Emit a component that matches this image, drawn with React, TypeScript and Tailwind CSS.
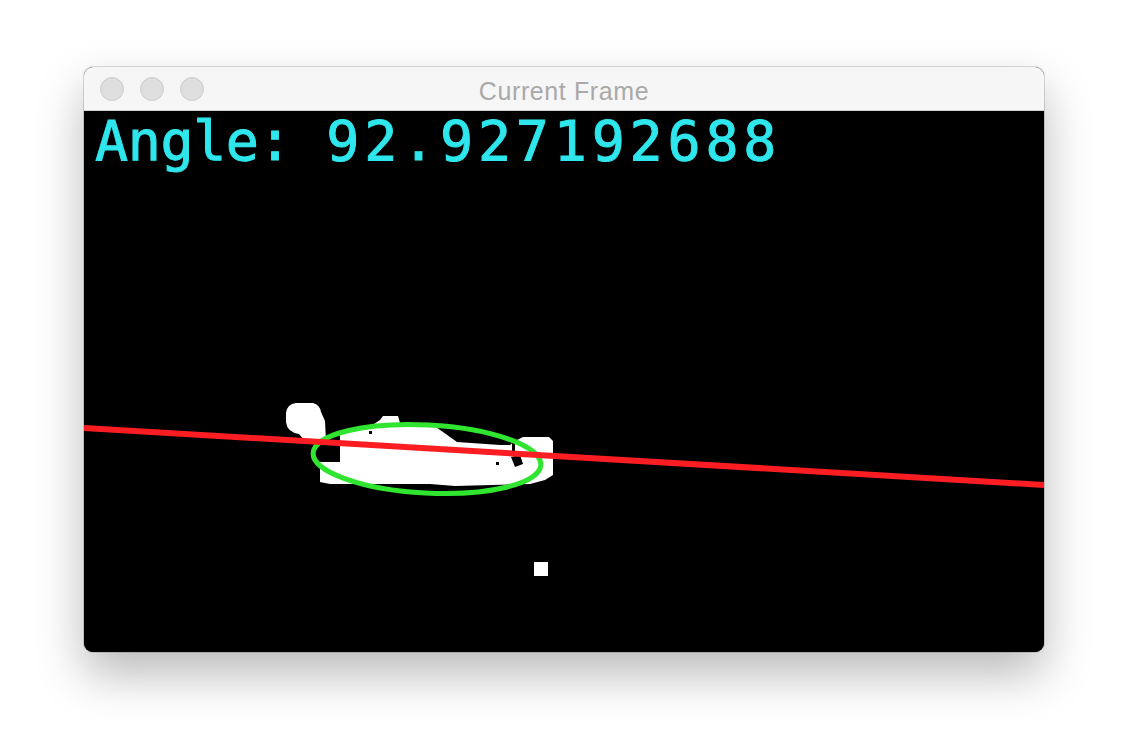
import React from 'react';

const RED = '#fc1d22';
const GREEN = '#2fe52f';

// the OpenCV frame: mask blobs, fitted ellipse and the orientation line
function FrameCanvas() {
  return (
    <svg width="960" height="541" viewBox="0 0 960 541" className="block bg-black">
      <g transform="translate(-84 -111)">
        {/* head blob */}
        <path
          d="M 296 403 L 313 403 Q 320 405 321 412 L 325 421 L 326 441 L 305 441 L 299 434 Q 287 432 286 422 L 286 413 Q 287 404 296 403 Z"
          fill="#fff"
        />
        {/* body blob */}
        <path
          d="M 340 432 L 368 428 L 380 420 L 383 416 L 398 416 L 400 423 L 430 423 L 443 432 L 457 442 L 500 445 L 510 445 L 515 441 L 523 437 L 549 437 L 553 441 L 553 475 L 545 480 L 530 484 L 455 486 L 430 484 L 330 484 L 320 482 L 320 462 L 340 462 Z"
          fill="#fff"
        />
        <path d="M 511 457 L 520 455 L 523 464 L 515 467 Z" fill="#000" />
        <rect x="512" y="442" width="3" height="9" fill="#000" />
        <rect x="496" y="462" width="3" height="3" fill="#000" />
        <rect x="369" y="431" width="3" height="3" fill="#000" />
        {/* stray pixel block */}
        <rect x="534" y="562" width="14" height="14" fill="#fff" />

        <ellipse
          cx="427"
          cy="459"
          rx="114"
          ry="34"
          transform="rotate(3 427 459)"
          fill="none"
          stroke={GREEN}
          strokeWidth="5"
        />
        <line x1="84" y1="428" x2="1044" y2="485" stroke={RED} strokeWidth="6" />
      </g>
    </svg>
  );
}

function TrafficLight() {
  return <div className="w-6 h-6 rounded-full bg-[#dedede] border border-[#cdcdcd]" />;
}

export default function App() {
  return (
    <div className="w-[1128px] h-[752px] bg-white pt-[67px] pl-[84px] overflow-hidden">
      <div className="w-[960px] rounded-[9px] overflow-hidden bg-black shadow-[0_22px_48px_rgba(0,0,0,0.28),0_0_0_1px_rgba(0,0,0,0.14)]">
        <header className="h-[44px] grid grid-cols-[1fr_auto_1fr] items-center bg-[#f6f6f6] border-b border-[#d3d3d3]">
          <div className="flex items-center gap-4 pl-4">
            <TrafficLight />
            <TrafficLight />
            <TrafficLight />
          </div>
          <h1
            className="text-[25px] leading-none tracking-[0.6px] text-[#a9a9a9] pt-[5px]"
            style={{ fontFamily: '"Liberation Sans", Arial, sans-serif' }}
          >
            Current Frame
          </h1>
          <div />
        </header>
        <div className="relative">
          <FrameCanvas />
          {/* angle readout drawn over the frame */}
          <div
            className="absolute top-[3px] left-[11px] flex whitespace-nowrap text-[55px] leading-none text-[#2ee6ec] [-webkit-text-stroke:1px_#2ee6ec]"
            style={{ fontFamily: '"DejaVu Sans Mono", "Liberation Mono", monospace' }}
          >
            <span className="tracking-[-0.4px]">Angle:</span>
            <span className="ml-[35px] tracking-[4.8px]">92.927192688</span>
          </div>
        </div>
      </div>
    </div>
  );
}
